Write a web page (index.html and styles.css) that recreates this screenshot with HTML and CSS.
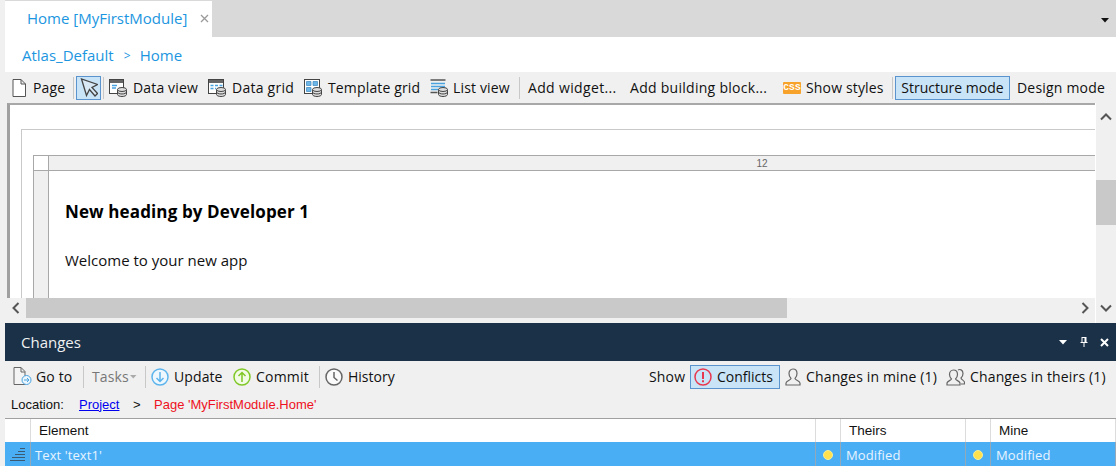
FILE: index.html
```html
<!DOCTYPE html>
<html lang="en">
<head>
    <meta charset="UTF-8">
    <meta name="viewport" content="width=device-width, initial-scale=1.0">
    <title>Home [MyFirstModule]</title>
    <link rel="stylesheet" href="styles.css">
</head>
<body>
    <div class="app">
        <div class="tabstrip">
            <div class="tab">
                <span class="tab-title">Home [MyFirstModule]</span>
                <svg class="tab-close" width="9" height="9" viewBox="0 0 9 9"><path d="M1 1l7 7M8 1l-7 7" stroke="#9a9a9a" stroke-width="1.3" fill="none"/></svg>
            </div>
            <svg class="tab-menu" width="9" height="5" viewBox="0 0 9 5"><path d="M0 0h8L4 4.500z" fill="#111"/></svg>
        </div>

        <div class="breadcrumb"><span>Atlas_Default</span><span class="crumb-sep">&gt;</span><span>Home</span></div>

        <div class="toolbar page-tools">
            <div class="tool t-page">
                <svg width="14" height="18" viewBox="0 0 14 18"><path d="M1 .5h8l4.500 4.500v12.500H1zM9 .5V5h4.500" fill="#fff" stroke="#555"/></svg>
                <span class="w-page">Page</span>
            </div>
            <i class="sep"></i>
            <div class="tool-on t-arrow">
                <svg width="18" height="20" viewBox="0 0 18 20"><path d="M1.500 1l5 16.500 3-6 5.500 6.500 2.500-2.500-5.500-6 5.500-3z" fill="#d8e8f4" stroke="#444" stroke-width="1.300"/></svg>
            </div>
            <i class="sep"></i>
            <div class="tool t-dataview">
                <svg width="18" height="18" viewBox="0 0 18 18"><rect x=".5" y=".5" width="14" height="14" fill="#fff" stroke="#444"/><path d="M1 1h13v3H1z" fill="#666"/><path d="M3 6.500h5M3 9h4" stroke="#4aa3df" stroke-width="1.500"/><path d="M8.500 10.500v5c0 1 2 2 4.500 2s4.500-1 4.500-2v-5" fill="#ddd" stroke="#444"/><ellipse cx="13" cy="10.500" rx="4.500" ry="2" fill="#ddd" stroke="#444"/><path d="M8.500 13c0 1 2 2 4.500 2s4.500-1 4.500-2" fill="none" stroke="#444"/></svg>
                <span class="w-dataview">Data view</span>
            </div>
            <div class="tool t-datagrid">
                <svg width="18" height="18" viewBox="0 0 18 18"><rect x=".5" y=".5" width="15" height="14" fill="#fff" stroke="#444"/><path d="M1 1h14v3H1z" fill="#666"/><path d="M2.500 6.500h3M7 6.500h3M11.500 6.500h3M2.500 9.500h3M7 9.500h1" stroke="#4aa3df" stroke-width="1.500"/><path d="M8.500 10.500v5c0 1 2 2 4.500 2s4.500-1 4.500-2v-5" fill="#ddd" stroke="#444"/><ellipse cx="13" cy="10.500" rx="4.500" ry="2" fill="#ddd" stroke="#444"/><path d="M8.500 13c0 1 2 2 4.500 2s4.500-1 4.500-2" fill="none" stroke="#444"/></svg>
                <span class="w-datagrid">Data grid</span>
            </div>
            <div class="tool t-template">
                <svg width="18" height="18" viewBox="0 0 18 18"><rect x=".5" y=".5" width="15" height="14" fill="#fff" stroke="#444"/><path d="M2.500 2.500h4.500v4H2.500zM9 2.500h4.500v4H9zM2.500 8.500h4.500v4H2.500z" fill="#6db6e8" stroke="#3b86bd" stroke-width=".7"/><path d="M8.500 10.500v5c0 1 2 2 4.500 2s4.500-1 4.500-2v-5" fill="#ddd" stroke="#444"/><ellipse cx="13" cy="10.500" rx="4.500" ry="2" fill="#ddd" stroke="#444"/><path d="M8.500 13c0 1 2 2 4.500 2s4.500-1 4.500-2" fill="none" stroke="#444"/></svg>
                <span class="w-template">Template grid</span>
            </div>
            <div class="tool t-listview">
                <svg width="18" height="18" viewBox="0 0 18 18"><path d="M.5 1h15M.5 13.500h7" stroke="#555" stroke-width="1.500"/><path d="M1 4.500h14M1 7.500h14M1 10.500h7" stroke="#4aa3df" stroke-width="1.500"/><path d="M8.500 10.500v5c0 1 2 2 4.500 2s4.500-1 4.500-2v-5" fill="#ddd" stroke="#444"/><ellipse cx="13" cy="10.500" rx="4.500" ry="2" fill="#ddd" stroke="#444"/><path d="M8.500 13c0 1 2 2 4.500 2s4.500-1 4.500-2" fill="none" stroke="#444"/></svg>
                <span class="w-listview">List view</span>
            </div>
            <i class="sep"></i>
            <div class="tool t-widget"><span class="w-widget">Add widget...</span></div>
            <div class="tool t-block"><span class="w-block">Add building block...</span></div>
            <div class="tool t-styles">
                <span class="css-icon">CSS</span>
                <span class="w-styles">Show styles</span>
            </div>
            <i class="sep"></i>
            <div class="tool-on t-structure"><span class="w-structure">Structure mode</span></div>
            <div class="tool t-design"><span class="w-design">Design mode</span></div>
        </div>

        <div class="editor">
            <div class="editor-main">
                <div class="canvas">
                    <div class="page-box">
                        <div class="layout-grid">
                            <div class="grid-head">
                                <div class="grid-corner"></div>
                                <div class="grid-ruler">12</div>
                            </div>
                            <div class="grid-body">
                                <div class="grid-side"></div>
                                <div class="grid-cell">
                                    <h1 class="heading">New heading by Developer 1</h1>
                                    <p class="welcome">Welcome to your new app</p>
                                </div>
                            </div>
                        </div>
                    </div>
                </div>
                <div class="hscroll">
                    <div class="scroll-btn">
                        <svg width="8" height="12" viewBox="0 0 8 12"><path d="M6.500 1L1.500 6l5 5" stroke="#555" stroke-width="2" fill="none"/></svg>
                    </div>
                    <div class="hthumb"></div>
                    <div class="scroll-btn btn-right">
                        <svg width="8" height="12" viewBox="0 0 8 12"><path d="M1.500 1l5 5-5 5" stroke="#555" stroke-width="2" fill="none"/></svg>
                    </div>
                </div>
            </div>
            <div class="vscroll">
                <svg width="12" height="8" viewBox="0 0 12 8"><path d="M1 6.500l5-5 5 5" stroke="#555" stroke-width="2" fill="none"/></svg>
                <div class="vthumb"></div>
                <svg class="v-down" width="12" height="8" viewBox="0 0 12 8"><path d="M1 1.500l5 5 5-5" stroke="#555" stroke-width="2" fill="none"/></svg>
            </div>
        </div>

        <div class="panel-head">
            <span class="panel-title">Changes</span>
            <div class="panel-icons">
                <svg width="9" height="5" viewBox="0 0 9 5"><path d="M0 0h8L4 4.500z" fill="#fff"/></svg>
                <svg width="8" height="10" viewBox="0 0 8 10"><path d="M1.500.5h5M2 1v4.500h4V1M.5 5.500h7M4 6v4" stroke="#fff" fill="none"/><path d="M4.500 1h1.500v4.500H4.500z" fill="#fff"/></svg>
                <svg width="9" height="9" viewBox="0 0 9 9"><path d="M1 1l7 7M8 1l-7 7" stroke="#fff" stroke-width="2" fill="none"/></svg>
            </div>
        </div>

        <div class="toolbar change-tools">
            <div class="tool c-goto">
                <svg width="19" height="19" viewBox="0 0 19 19"><path d="M1 .5h7l4 4v13H1zM8 .5V5h4" fill="#f4f4f4" stroke="#666"/><circle cx="13.500" cy="13" r="4.500" fill="#eaf5fd" stroke="#4aa3df"/><path d="M11 13h5M14 11l2 2-2 2" stroke="#4aa3df" fill="none"/></svg>
                <span class="w-goto">Go to</span>
            </div>
            <i class="sep"></i>
            <div class="tool c-tasks">
                <span class="w-tasks">Tasks</span>
                <svg width="7" height="4" viewBox="0 0 7 4"><path d="M0 0h6.500L3.250 3.500z" fill="#aaa"/></svg>
            </div>
            <i class="sep"></i>
            <div class="tool c-update">
                <svg width="18" height="18" viewBox="0 0 18 18"><circle cx="9" cy="9" r="8" fill="#eef7fd" stroke="#5cb4ec" stroke-width="1.500"/><path d="M9 4v9.500M5.500 10L9 13.500 12.500 10" stroke="#5cb4ec" stroke-width="1.500" fill="none"/></svg>
                <span class="w-update">Update</span>
            </div>
            <div class="tool c-commit">
                <svg width="18" height="18" viewBox="0 0 18 18"><circle cx="9" cy="9" r="8" fill="#f2fbe6" stroke="#80c828" stroke-width="1.500"/><path d="M9 14V4.500M5.500 8L9 4.500 12.500 8" stroke="#80c828" stroke-width="1.500" fill="none"/></svg>
                <span class="w-commit">Commit</span>
            </div>
            <i class="sep"></i>
            <div class="tool c-history">
                <svg width="18" height="18" viewBox="0 0 18 18"><circle cx="9" cy="9" r="8" fill="#fafafa" stroke="#666" stroke-width="1.500"/><path d="M9 4v5.500l3.500 3" stroke="#666" stroke-width="1.500" fill="none"/></svg>
                <span class="w-history">History</span>
            </div>
            <div class="tools-right">
                <span class="w-show">Show</span>
                <div class="tool-on c-conflicts">
                    <svg width="18" height="18" viewBox="0 0 18 18"><circle cx="9" cy="9" r="8" fill="none" stroke="#e8384f" stroke-width="1.500"/><path d="M9 4v7" stroke="#e8384f" stroke-width="2"/><path d="M9 12.300v2" stroke="#e8384f" stroke-width="2"/></svg>
                    <span class="w-conflicts">Conflicts</span>
                </div>
                <div class="tool c-mine">
                    <svg width="16" height="18" viewBox="0 0 16 18"><path d="M8 1c2.500 0 4 2 4 4.500S10.500 10 10 10.500c0 1.500 4.500 2 5 4.500v2H1v-2c.5-2.500 5-3 5-4.500C5.500 10 4 8 4 5.500S5.500 1 8 1z" fill="none" stroke="#666" stroke-width="1.200"/></svg>
                    <span class="w-mine">Changes in mine (1)</span>
                </div>
                <div class="tool c-theirs">
                    <svg width="19" height="18" viewBox="0 0 19 18"><path d="M12 2c1.500-1 5-.5 5 3.500 0 2-1 3.500-2 4.500 0 1.500 2.500 2 3.500 4v2H15" fill="none" stroke="#666" stroke-width="1.200"/><path d="M7.500 2c2.500 0 4 2 4 4.500S10 10.500 9.500 11c0 1 4 2 4.500 4v2H1v-2c.5-2 4.500-3 4.500-4C5 10.500 3.500 9 3.500 6.500S5 2 7.500 2z" fill="#f0f0f0" stroke="#666" stroke-width="1.200"/></svg>
                    <span class="w-theirs">Changes in theirs (1)</span>
                </div>
            </div>
        </div>

        <div class="location">
            <span class="loc-label">Location:</span>
            <a class="loc-link">Project</a>
            <span class="loc-sep">&gt;</span>
            <span class="loc-page">Page 'MyFirstModule.Home'</span>
        </div>

        <div class="table">
            <div class="row row-head">
                <div class="cell"></div>
                <div class="cell">Element</div>
                <div class="cell"></div>
                <div class="cell">Theirs</div>
                <div class="cell"></div>
                <div class="cell">Mine</div>
            </div>
            <div class="row row-selected">
                <div class="cell cell-icon">
                    <svg width="16" height="14" viewBox="0 0 16 14"><path d="M10 .5h5M8 3.500h7M5 6.500h10M2 9.500h13M0 12.500h15" stroke="#3d5a73" stroke-width="1"/></svg>
                </div>
                <div class="cell cell-name">Text 'text1'</div>
                <div class="cell cell-dot"><i class="dot"></i></div>
                <div class="cell">Modified</div>
                <div class="cell cell-dot"><i class="dot"></i></div>
                <div class="cell">Modified</div>
            </div>
        </div>
    </div>
</body>
</html>
```

FILE: styles.css
```css
* {
    box-sizing: border-box;
}
html, body {
    margin: 0;
    padding: 0;
    overflow: hidden;
}
body {
    font-family: "Open Sans", "Noto Sans", sans-serif;
    font-size: 14px;
    color: #111;
    background: #f0f0f0;
}
.app {
    width: 1116px;
    height: 466px;
    padding-left: 5px;
    display: flex;
    flex-direction: column;
    overflow: hidden;
}

/* tabs */
.tabstrip {
    height: 37px;
    flex: none;
    background: #d9d9d9;
    padding-top: 1px;
    display: flex;
    align-items: flex-start;
    justify-content: space-between;
}
.tab {
    width: 207px;
    height: 36px;
    background: #fff;
    color: #1c96e0;
    font-size: 15px;
    display: flex;
    align-items: center;
    padding: 0 0 2px 22px;
}
.tab-title {
    width: 173px;
}
.tab-menu {
    margin: 17px 6px 0 0;
}
.breadcrumb {
    height: 35px;
    flex: none;
    background: #fff;
    color: #1c96e0;
    font-size: 15px;
    display: flex;
    align-items: center;
    padding: 1px 0 0 17px;
}
.crumb-sep {
    width: 7px;
    margin: 0 9px 0 10px;
    font-size: 12px;
}

/* toolbars */
.toolbar {
    flex: none;
    background: #f0f0f0;
    display: flex;
    align-items: center;
    white-space: nowrap;
    letter-spacing: 0.15px;
}
.page-tools {
    height: 31px;
    margin-left: -5px;
    padding-left: 12px;
}
.tool, .tool-on {
    display: flex;
    align-items: center;
    flex: none;
}
.tool-on {
    height: 24px;
    background: #c9e4f7;
    border: 1px solid #5b93cf;
}
.tool span, .tool-on span {
    display: block;
}
.sep {
    width: 1px;
    height: 22px;
    background: #c8c8c8;
    flex: none;
}
.t-page { gap: 7px; margin-right: 8px; }
.t-arrow {
    width: 25px;
    margin: 0 2px;
    justify-content: center;
}
.t-dataview { gap: 6px; margin-left: 5px; }
.t-datagrid { gap: 6px; margin-left: 10px; }
.t-template { gap: 6px; margin-left: 10px; }
.t-listview { gap: 5px; margin-left: 10px; margin-right: 10px; }
.t-widget { margin-left: 8px; }
.t-block { margin-left: 13px; }
.t-styles { gap: 5px; margin-left: 15px; margin-right: 9px; }
.t-structure {
    width: 115px;
    margin-left: 2px;
    justify-content: center;
}
.t-design { margin-left: 7px; }
.w-page { width: 32px; }
.w-dataview { width: 65px; }
.w-datagrid { width: 62px; letter-spacing: 0.25px; }
.w-template { width: 92px; }
.w-listview { width: 56px; }
.w-widget { width: 89px; letter-spacing: 0.35px; }
.w-block { width: 138px; letter-spacing: 0.28px; }
.w-styles { width: 77px; }
.w-structure { letter-spacing: 0; }
.w-design { width: 88px; letter-spacing: 0.2px; }
.css-icon {
    width: 18px;
    height: 12px;
    background: #f7a32b;
    border-radius: 1px;
    color: #fff;
    font: bold 9.500px/12px "Liberation Mono", monospace;
    text-align: center;
}

/* page editor */
.editor {
    height: 220px;
    flex: none;
    display: flex;
    background: #f0f0f0;
}
.editor-main {
    flex: 1;
    min-width: 0;
    display: flex;
    flex-direction: column;
    border-right: 1px solid #fff;
}
.canvas {
    height: 195px;
    flex: none;
    margin-left: 2px;
    background: #fff;
    border-top: 2px solid #a8a8a8;
    border-left: 3px solid #a0a0a0;
    padding: 24px 0 0 11px;
    overflow: hidden;
}
.page-box {
    height: 200px;
    border-top: 1px solid #c9c9c9;
    border-left: 1px solid #c9c9c9;
    padding: 25px 0 0 11px;
}
.layout-grid {
    width: 1442px;
    height: 180px;
    border-left: 1px solid #a8a8a8;
    border-top: 1px solid #a8a8a8;
}
.grid-head {
    height: 15px;
    display: flex;
    border-bottom: 1px solid #a8a8a8;
}
.grid-corner {
    width: 15px;
    flex: none;
    background: #fff;
    border-right: 1px solid #a8a8a8;
}
.grid-ruler {
    flex: 1;
    background: #f0f0f0;
    color: #666;
    font: 10px/15px "Liberation Sans", sans-serif;
    text-align: center;
}
.grid-body {
    display: flex;
    height: 160px;
}
.grid-side {
    width: 15px;
    flex: none;
    background: #f0f0f0;
    border-right: 1px solid #a8a8a8;
}
.grid-cell {
    flex: 1;
    background: #fff;
    padding: 30px 0 0 16px;
}
.heading {
    margin: 0;
    font-size: 17px;
    line-height: 22px;
    font-weight: 700;
    color: #000;
    letter-spacing: 0.12px;
}
.welcome {
    margin: 27px 0 0;
    font-size: 15px;
    line-height: 20px;
    color: #111;
}
.hscroll {
    height: 20px;
    flex: none;
    display: flex;
    background: #f0f0f0;
}
.scroll-btn {
    width: 21px;
    flex: none;
    display: flex;
    align-items: center;
    justify-content: center;
}
.btn-right {
    margin-left: auto;
}
.hthumb {
    width: 761px;
    background: #c9c9c9;
}
.vscroll {
    width: 20px;
    flex: none;
    display: flex;
    flex-direction: column;
    align-items: center;
    padding-top: 10px;
    background: #f0f0f0;
}
.vthumb {
    width: 20px;
    height: 45px;
    margin-top: 59px;
    background: #c9c9c9;
}
.v-down {
    margin-top: 79px;
}

/* changes panel */
.panel-head {
    height: 38px;
    flex: none;
    background: #1a3148;
    color: #f0f0f0;
    font-size: 15px;
    display: flex;
    align-items: center;
    justify-content: space-between;
    padding: 0 7px 0 16px;
}
.panel-icons {
    display: flex;
    align-items: center;
    gap: 12px;
}
.change-tools {
    height: 31px;
    padding-left: 8px;
}
.c-goto { gap: 4px; margin-right: 10px; }
.c-tasks {
    gap: 5px;
    color: #777;
    margin: 0 8px 0 8px;
}
.c-update { gap: 5px; margin-left: 5px; }
.c-commit { gap: 5px; margin-left: 10px; margin-right: 9px; }
.c-history { gap: 5px; margin-left: 5px; }
.w-goto { width: 37px; }
.w-tasks { width: 33px; }
.w-update { width: 49px; letter-spacing: 0.1px; }
.w-commit { width: 54px; letter-spacing: 0.2px; }
.w-history { width: 47px; letter-spacing: 0; }
.tools-right {
    margin-left: auto;
    display: flex;
    align-items: center;
}
.w-show { width: 36px; margin-right: 5px; }
.c-conflicts {
    width: 90px;
    gap: 5px;
    padding-left: 3px;
}
.w-conflicts { width: 57px; letter-spacing: 0; }
.c-mine { gap: 5px; margin-left: 5px; }
.w-mine { width: 131px; }
.c-theirs { gap: 5px; margin-left: 9px; margin-right: 12px; }
.w-theirs { width: 134px; }
.location {
    height: 26px;
    flex: none;
    display: flex;
    align-items: center;
    padding: 0 0 2px 6px;
    font: 13px "Liberation Sans", sans-serif;
}
.loc-label {
    width: 68px;
}
.loc-link {
    width: 54px;
    color: #0000ee;
    text-decoration: underline;
}
.loc-sep {
    width: 21px;
}
.loc-page {
    color: #ee1122;
}

/* grid of changes */
.table {
    flex: 1;
    background: #fff;
    border-top: 1px solid #a0a0a0;
    font: 13.500px "Liberation Sans", sans-serif;
}
.row {
    display: grid;
    grid-template-columns: 26px 785px 25px 125px 25px 1fr;
}
.row-head {
    height: 23px;
    color: #111;
}
.row-selected {
    height: 25px;
    background: #4aaef5;
    color: #e8f4fe;
    font: 13px "Open Sans", sans-serif;
    letter-spacing: 0.1px;
}
.cell {
    display: flex;
    align-items: center;
    padding-left: 8px;
    border-right: 1px solid #dcdcdc;
}
.row-selected .cell {
    padding-left: 5px;
    border-right-color: #93a9ba;
}
.row-selected .cell-name {
    padding-left: 4px;
}
.row-selected .cell-dot {
    padding-left: 7px;
}
.dot {
    width: 10px;
    height: 10px;
    border-radius: 50%;
    background: #ffe14d;
    border: 1px solid #f4ee9a;
}
```
